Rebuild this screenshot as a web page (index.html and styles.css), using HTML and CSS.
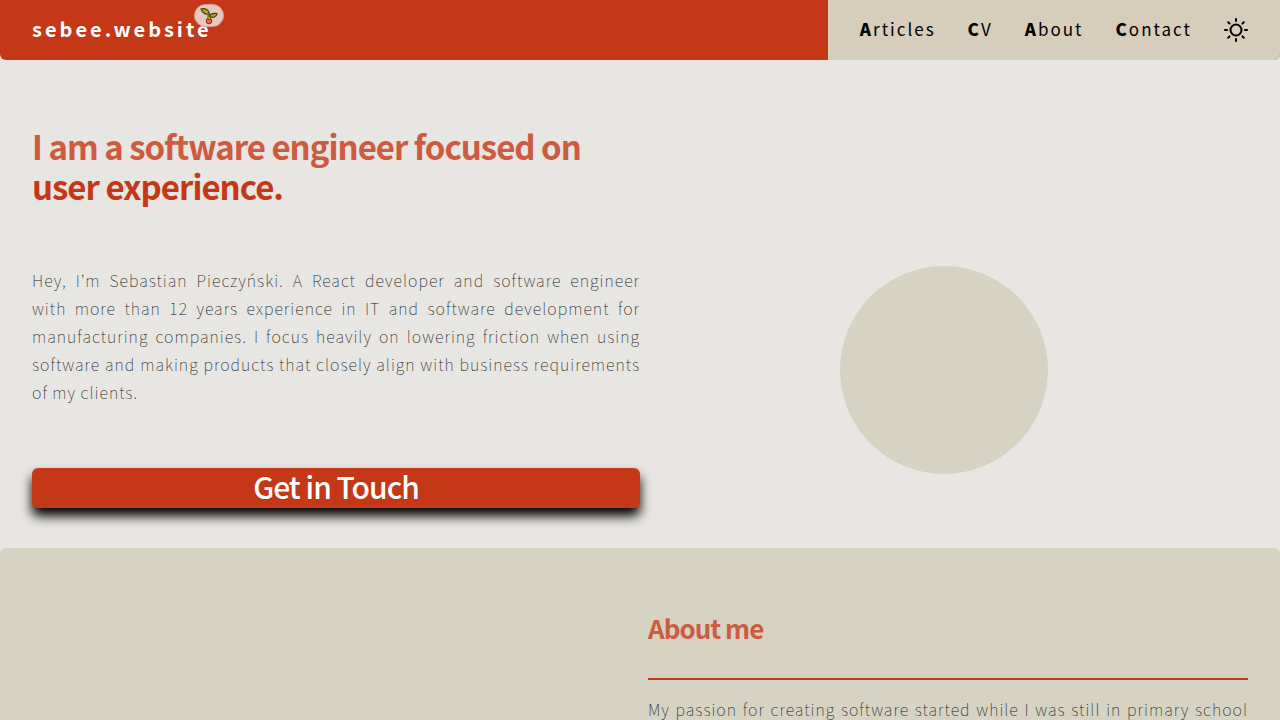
FILE: index.html
```html
<!DOCTYPE html>
<html lang="en">
<head>
<meta charset="utf-8">
<meta name="viewport" content="width=device-width, initial-scale=1">
<title>sebee.website</title>
<link rel="stylesheet" href="styles.css">
</head>
<body>
<header class="topbar">
  <a class="brand" href="#">sebee.website
    <span class="badge">
      <svg viewBox="0 0 18 18" aria-hidden="true">
        <circle cx="9" cy="14" r="2.800" fill="#f0683a" stroke="#7b351b"/>
        <path d="M8 12.500V8H10.500v4.500z" fill="#d5b82a" stroke="#4d3b12" stroke-width=".8"/>
        <path d="M1 2C5 1 8.500 2 9.500 7 5.500 8 2.500 5.500 1 2Z" fill="#a9a914" stroke="#403b12" stroke-width="1.200"/>
        <path d="M9.500 9.500C10 6.500 13 6 17 6.500 16.500 10 13 11.500 9.500 9.500Z" fill="#a9a914" stroke="#403b12" stroke-width="1.200"/>
      </svg>
    </span>
  </a>
  <nav class="nav">
    <a href="#">Articles</a>
    <a href="#">CV</a>
    <a href="#about">About</a>
    <a href="#contact">Contact</a>
    <button class="theme" type="button" aria-label="Switch theme">
      <svg viewBox="0 0 24 24" fill="none" stroke="currentColor" stroke-width="2" stroke-linecap="round" aria-hidden="true">
        <circle cx="12" cy="12" r="5.500"/>
        <path d="M12 1v2M12 21v2M1 12h2M21 12h2M4.200 4.200l1.400 1.400M18.400 18.400l1.400 1.400M4.200 19.800l1.400-1.400M18.400 5.600l1.400-1.400"/>
      </svg>
    </button>
  </nav>
</header>
<main>
  <section class="hero">
    <h1 class="title">I am a software engineer focused on user experience.</h1>
    <p class="copy">Hey, I’m Sebastian Pieczyński. A React developer and software engineer with&nbsp;more than 12 years experience in IT and software development for manufacturing companies. I focus heavily on lowering friction when using software and making products that closely align with business requirements of my clients.</p>
    <button class="cta" type="button">Get in Touch</button>
    <div class="portrait"></div>
  </section>
  <section class="about" id="about">
    <div class="about-text">
      <h2 class="subtitle">About me</h2>
      <p class="copy">My passion for creating software started while I was still in primary school</p>
    </div>
  </section>
</main>
</body>
</html>
```
FILE: styles.css
```css
* { box-sizing: border-box; }
body {
  margin: 0;
  background: #e8e6e2;
  color: #000;
  font-family: "Noto Sans CJK KR", "Open Sans", sans-serif;
}
h1, h2, p { margin: 0; }
.topbar {
  display: flex;
  justify-content: space-between;
  height: 60px;
  background: #c53817;
  border-radius: 0 0 6px 6px;
  overflow: hidden;
}
.brand {
  position: relative;
  margin-left: 32px;
  color: #fff;
  font-size: 20px;
  font-weight: 700;
  letter-spacing: 3px;
  line-height: 58px;
  text-decoration: none;
}
.badge {
  position: absolute;
  top: 4px;
  right: -12px;
  display: grid;
  place-items: center;
  width: 30px;
  height: 23px;
  border: 1px solid #dc9f92;
  border-radius: 12px;
  background: #e9c7c1;
}
.badge svg { width: 18px; height: 18px; }
.nav {
  display: flex;
  align-items: center;
  gap: 32px;
  padding: 0 32px;
  background: #d6cdba;
}
.nav a {
  display: block;
  color: #000;
  font-size: 17px;
  font-weight: 400;
  letter-spacing: 2px;
  line-height: 58px;
  padding-bottom: 2px;
  text-decoration: none;
}
.nav a::first-letter { font-weight: 900; }
.theme {
  display: flex;
  padding: 0;
  border: 0;
  background: none;
  color: #000;
}
.theme svg { width: 24px; height: 24px; }
.hero {
  display: grid;
  grid-template-columns: 1fr 1fr;
  padding: 66px 32px 40px;
}
.title {
  color: #c53817;
  font-size: 33px;
  font-weight: 700;
  letter-spacing: -1px;
  line-height: 40px;
  margin-bottom: 60px;
}
.title::first-line { color: #cd5b3f; }
.copy {
  color: #202020;
  font-size: 16px;
  font-weight: 100;
  letter-spacing: 1px;
  line-height: 28px;
  text-align: justify;
}
.hero .copy { grid-column: 1; }
.about .copy { text-align-last: justify; }
.cta {
  grid-column: 1;
  height: 40px;
  margin-top: 62px;
  padding: 0 0 4px;
  border: 0;
  border-radius: 6px;
  background: #c53817;
  box-shadow: 0 8px 12px #000;
  color: #fff;
  font: 500 30px/36px "Noto Sans CJK KR", "Open Sans", sans-serif;
  letter-spacing: -1px;
}
.portrait {
  grid-column: 2;
  grid-row: 2 / 4;
  justify-self: center;
  width: 208px;
  height: 208px;
  border-radius: 50%;
  background: #d6d3c2;
}
.about {
  display: grid;
  grid-template-columns: 1fr 1fr;
  gap: 16px;
  padding: 60px 32px;
  border-radius: 6px 6px 0 0;
  background: #d6d3c2;
}
.about-text { grid-column: 2; }
.subtitle {
  margin-bottom: 15px;
  padding-bottom: 30px;
  border-bottom: 2px solid #c53817;
  color: #cd5b3f;
  font-size: 26px;
  font-weight: 700;
  letter-spacing: -1px;
  line-height: 40px;
}
```
